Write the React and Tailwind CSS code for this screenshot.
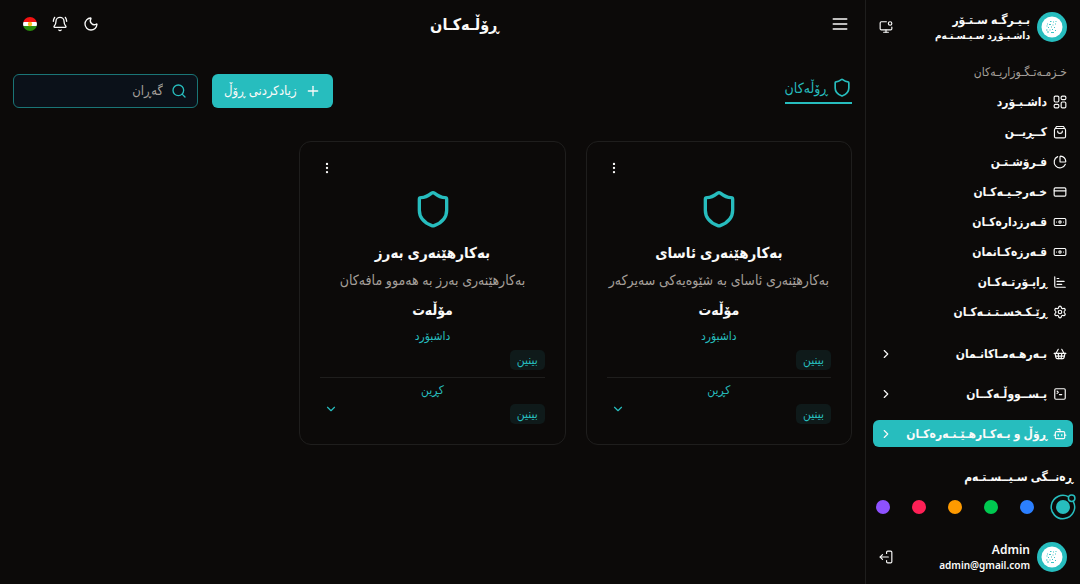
import { useState } from "react";
import {
  Banknote,
  BellRing,
  Bot,
  ChartBar,
  ChartPie,
  ChevronDown,
  ChevronRight,
  CreditCard,
  EllipsisVertical,
  MonitorDot,
  Moon,
  Plus,
  Search,
  Settings,
  ShoppingBasket,
  SquareTerminal,
} from "lucide-react";

const Icon = ({ children, className }) => (
  <svg
    viewBox="0 0 24 24"
    fill="none"
    stroke="currentColor"
    strokeWidth="2"
    strokeLinecap="round"
    strokeLinejoin="round"
    className={className}
    aria-hidden="true"
  >
    {children}
  </svg>
);

const DashboardIcon = ({ className }) => (
  <Icon className={className}>
    <rect x="2" y="2" width="8" height="10" rx="2" />
    <rect x="14" y="2" width="8" height="6" rx="2" />
    <rect x="2" y="16" width="8" height="6" rx="2" />
    <rect x="14" y="12" width="8" height="10" rx="2" />
  </Icon>
);

const BagIcon = ({ className }) => (
  <Icon className={className}>
    <path d="M4 6l2-3.4h12L20 6" />
    <rect x="2.5" y="6" width="19" height="16" rx="2.5" />
    <path d="M8 10.500c0 5 8 5 8 0" />
  </Icon>
);

const ShieldIcon = ({ className }) => (
  <Icon className={className}>
    <path d="M12.800 1.900c-.500-.400-1.100-.400-1.600 0C9 3.600 7 4.600 4.800 4.600c-.600 0-1 .400-1 1v6.500c0 5 3.200 7.600 7.500 9.300.500.200.900.200 1.400 0 4.300-1.700 7.500-4.300 7.500-9.300V5.600c0-.600-.400-1-1-1-2.200 0-4.200-1-6.400-2.700z" />
  </Icon>
);

const MenuIcon = ({ className }) => (
  <Icon className={className}>
    <path d="M4 6h16M4 12h16M4 18h16" />
  </Icon>
);

const LogoutIcon = ({ className }) => (
  <Icon className={className}>
    <path d="M13 6V4a2 2 0 0 1 2-2h5a2 2 0 0 1 2 2v16a2 2 0 0 1-2 2h-5a2 2 0 0 1-2-2v-2" />
    <path d="M16 12H2" />
    <path d="M6 8l-4 4 4 4" />
  </Icon>
);

const Logo = () => (
  <svg viewBox="0 0 30 30" className="size-[30px] shrink-0" aria-hidden="true">
    <circle cx="15" cy="15" r="15" fill="#27bdbe" />
    <circle cx="15" cy="15" r="10.500" fill="#fff" />
    <path
      d="M10 12h1M13 9.500h1.500M16 10h1M18.500 9.500h1M9.500 14h1M12 12.500h2M15.500 13h1M18 12h1M11 15.500h1M14 15h1M17 15.500h1M9 18h1.500M12.500 18h1M15 17.500h1M18 18.500h1M10 20h2M14 20.500h3"
      stroke="#27bdbe"
      strokeWidth="0.900"
    />
  </svg>
);

const Flag = () => (
  <svg viewBox="0 0 14 14" className="size-3.5" aria-hidden="true">
    <clipPath id="flag">
      <circle cx="7" cy="7" r="7" />
    </clipPath>
    <g clipPath="url(#flag)">
      <path fill="#f31212" d="M0 0h14v5H0z" />
      <path fill="#fff" d="M0 5h14v4H0z" />
      <path fill="#2a8a0c" d="M0 9h14v5H0z" />
      <circle cx="7" cy="7" r="2.200" fill="#fbc021" />
    </g>
  </svg>
);

const links = [
  { title: "داشـبـۆرد", icon: DashboardIcon },
  { title: "کــڕیــن", icon: BagIcon },
  { title: "فـرۆشـتـن", icon: ChartPie },
  { title: "خـەرجـیـەکـان", icon: CreditCard },
  { title: "قـەرزدارەکـان", icon: Banknote },
  { title: "قـەرزەکـانمان", icon: Banknote },
  { title: "ڕاپـۆرتـەکـان", icon: ChartBar },
  { title: "ڕێـکـخسـتـنـەکـان", icon: Settings },
];

const groups = [
  { title: "بـەرهـەمـاکانـمان", icon: ShoppingBasket },
  { title: "پـســووڵـەکــان", icon: SquareTerminal },
  { title: "ڕۆڵ و بـەکـارهـێـنـەرەکـان", icon: Bot, active: true },
];

const colors = [
  { name: "teal", className: "bg-[#27bdbe]" },
  { name: "blue", className: "bg-[#2b7fff]" },
  { name: "green", className: "bg-[#00c950]" },
  { name: "orange", className: "bg-[#fe9a00]" },
  { name: "rose", className: "bg-[#ff2056]" },
  { name: "violet", className: "bg-[#8e51ff]" },
];

const roles = [
  {
    title: "بەکارهێنەری ئاسای",
    description: "بەکارهێنەری ئاسای بە شێوەیەکی سەیرکەر",
  },
  {
    title: "بەکارهێنەری بەرز",
    description: "بەکارهێنەری بەرز بە هەموو مافەکان",
  },
];

const permissions = ["داشبۆرد", "کڕین"];

const RoleCard = ({ role }) => (
  <article className="rounded-xl border border-[#1f1e1d] px-5 pt-4 pb-5">
    <div className="flex justify-end">
      <button aria-label="menu" className="flex h-5 w-3.5 items-center justify-center">
        <EllipsisVertical className="size-3.5" />
      </button>
    </div>
    <div className="flex flex-col items-center pt-3">
      <ShieldIcon className="size-10 text-[#27bdbe]" />
      <h2 className="mt-2.5 text-[15px] leading-6 font-bold whitespace-nowrap">
        {role.title}
      </h2>
      <p className="mt-1 text-sm leading-6 whitespace-nowrap text-[#a6a09b]">
        {role.description}
      </p>
      <h3 className="mt-1 text-sm leading-7 font-bold">مۆڵەت</h3>
    </div>
    <div className="relative">
      <ul className="divide-y divide-[#1f1e1d]">
        {permissions.map((permission) => (
          <li key={permission} className="pb-[7px] last:pb-0">
            <p className="pt-0.5 text-center text-xs leading-5 text-[#27bdbe]">
              {permission}
            </p>
            <span className="mt-1 inline-block h-5 rounded-[5px] bg-[#0f1a1a] px-[7px] align-top text-xs leading-5 text-[#27bdbe]">
              بینین
            </span>
          </li>
        ))}
      </ul>
      <button
        aria-label="more"
        className="absolute bottom-2 left-1 text-[#27bdbe]"
      >
        <ChevronDown className="size-3.5" />
      </button>
    </div>
  </article>
);

const Sidebar = () => {
  const [color, setColor] = useState("teal");

  return (
    <aside className="flex w-[214px] shrink-0 flex-col pt-3 pb-3">
      <div className="flex items-center gap-[7px] px-[13px]">
        <Logo />
        <div className="grow whitespace-nowrap">
          <p className="text-xs leading-4 font-bold">بـیـرگـە سـتـۆر</p>
          <p className="text-[10px] leading-3.5 font-bold">داشـبـۆڕد سـیـسـتـەم</p>
        </div>
        <button aria-label="display">
          <MonitorDot className="size-3.5" />
        </button>
      </div>

      <p className="mt-5 px-[13px] text-xs leading-5 text-[#a6a09b]">
        خـزمـەتـگـوزاریـەکان
      </p>
      <nav className="mt-[5px] px-[7px]">
        {links.map(({ title, icon: LinkIcon }) => (
          <a
            key={title}
            href="#"
            className="flex h-[30px] items-center gap-1.5 px-1.5 text-xs font-bold whitespace-nowrap"
          >
            <LinkIcon className="size-3.5 shrink-0" />
            {title}
          </a>
        ))}
        <div className="mt-[13px] flex flex-col gap-[13px]">
          {groups.map(({ title, icon: GroupIcon, active }) => (
            <button
              key={title}
              className={`flex h-[27px] items-center gap-1.5 rounded-md px-1.5 text-xs font-bold whitespace-nowrap ${
                active ? "bg-[#27bdbe]" : ""
              }`}
            >
              <GroupIcon className="size-3.5 shrink-0" />
              {title}
              <ChevronRight className="mr-auto size-3.5 shrink-0" />
            </button>
          ))}
        </div>
      </nav>

      <fieldset className="mt-5">
        <legend className="px-[7px] text-xs leading-5 font-bold">
          ڕەنــگی سـیــسـتـەم
        </legend>
        <div className="mt-[7px] flex justify-between px-1">
          {colors.map(({ name, className }) => (
            <label
              key={name}
              className="relative flex size-[26px] items-center justify-center"
            >
              <input
                type="radio"
                name="color"
                aria-label={name}
                checked={color === name}
                onChange={() => setColor(name)}
                className={`size-3.5 appearance-none rounded-full ${className}`}
              />
              {color === name && (
                <Icon className="absolute inset-0 size-[26px] text-[#27bdbe]">
                  <path
                    strokeWidth="1.400"
                    d="M17.200 2.600a10.800 10.800 0 1 0 4.400 4.600"
                  />
                  <circle cx="20" cy="4" r="3" strokeWidth="1.400" />
                </Icon>
              )}
            </label>
          ))}
        </div>
      </fieldset>

      <div className="mt-auto flex items-center gap-[7px] px-[13px]">
        <Logo />
        <div className="grow">
          <p className="text-xs leading-4 font-semibold">Admin</p>
          <p className="text-[10px] leading-3.5 font-semibold">admin@gmail.com</p>
        </div>
        <button aria-label="logout">
          <LogoutIcon className="size-3.5" />
        </button>
      </div>
    </aside>
  );
};

const App = () => (
  <div
    dir="rtl"
    className="flex min-h-screen bg-[#0c0a09] font-['Noto_Sans','DejaVu_Sans_Condensed','DejaVu_Sans',sans-serif] text-[#fafaf9]"
  >
    <Sidebar />
    <main className="min-w-0 grow border-r border-[#1f1e1d] px-[13px]">
      <header className="flex h-12 items-center justify-between px-0.5">
        <button aria-label="sidebar">
          <MenuIcon className="size-5" />
        </button>
        <h1 className="text-base leading-6 font-bold">ڕۆڵـەکـان</h1>
        <div className="flex items-center gap-[15px] pl-2">
          <button aria-label="theme">
            <Moon className="size-4" />
          </button>
          <button aria-label="notifications">
            <BellRing className="size-4" />
          </button>
          <button aria-label="language">
            <Flag />
          </button>
        </div>
      </header>

      <div className="mt-[26px] flex items-start justify-between">
        <a
          href="#"
          className="flex h-[30px] items-center gap-1 border-b-2 border-[#27bdbe] text-sm text-[#27bdbe]"
        >
          <ShieldIcon className="size-5" />
          ڕۆڵەکان
        </a>
        <div className="flex gap-[14px]">
          <button className="flex h-[34px] items-center gap-2 rounded-md bg-[#27bdbe] px-3 text-[13px] font-medium whitespace-nowrap">
            <Plus className="size-4" />
            زیادکردنی ڕۆڵ
          </button>
          <label className="flex h-[34px] w-[185px] items-center gap-2 rounded-md border border-[#1a7576] bg-[#0b1119] px-2.5">
            <Search className="size-4 shrink-0 text-[#27bdbe]" />
            <input
              type="text"
              placeholder="گەڕان"
              aria-label="گەڕان"
              className="w-full min-w-0 bg-transparent text-[13px] outline-none placeholder:text-[#a6a09b]"
            />
          </label>
        </div>
      </div>

      <section className="mt-[33px] grid grid-cols-3 gap-5">
        {roles.map((role) => (
          <RoleCard key={role.title} role={role} />
        ))}
      </section>
    </main>
  </div>
);

export default App;
